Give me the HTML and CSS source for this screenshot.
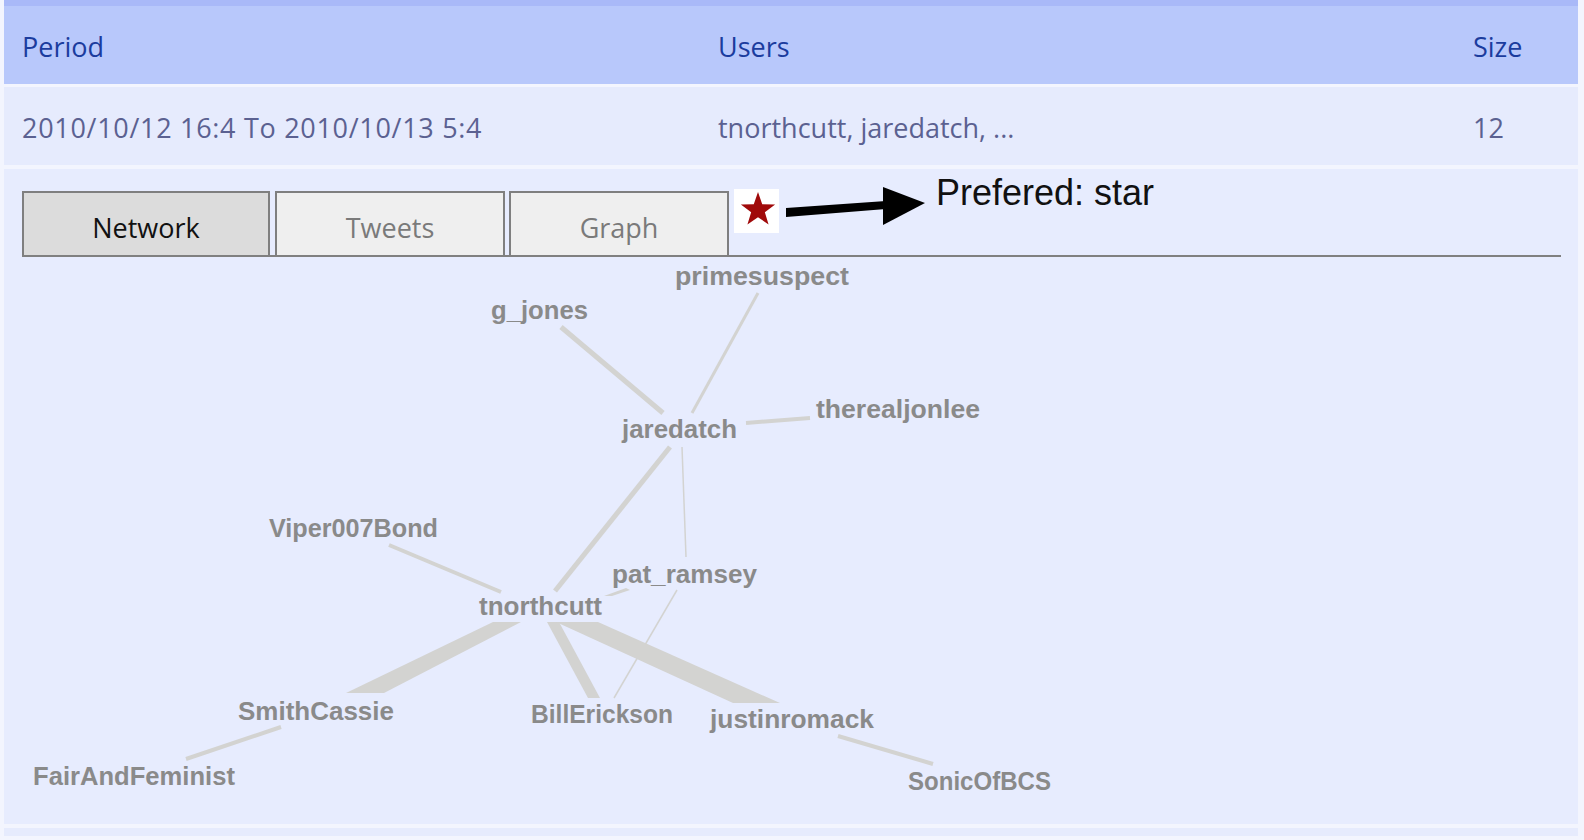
FILE: index.html
```html
<!DOCTYPE html>
<html lang="en">
<head>
<meta charset="utf-8">
<title>Conversation clusters</title>
<link rel="stylesheet" href="styles.css">
</head>
<body>
<div class="page">
  <div class="row head">
    <div class="cell">Period</div>
    <div class="cell">Users</div>
    <div class="cell">Size</div>
  </div>
  <div class="row data">
    <div class="cell period">2010/10/12 16:4 To 2010/10/13 5:4</div>
    <div class="cell">tnorthcutt, jaredatch, ...</div>
    <div class="cell">12</div>
  </div>
  <div class="panel">
    <div class="tabbar">
      <div class="tab active tab-network">Network</div>
      <div class="tab tab-tweets">Tweets</div>
      <div class="tab tab-graph">Graph</div>
      <div class="star-box">
        <svg width="45" height="44" viewBox="0 0 45 44">
          <polygon class="star" transform="translate(24 21)" points="0,-18 4.23,-5.82 17.12,-5.56 6.85,2.22 10.58,14.56 0,7.2 -10.58,14.56 -6.85,2.22 -17.12,-5.56 -4.23,-5.82"/>
        </svg>
      </div>
      <svg class="arrow" width="139" height="44" viewBox="0 0 139 44">
        <polygon points="0,23 100,16 100,24 0,32"/>
        <polygon points="97,2 139,18 97,40"/>
      </svg>
      <div class="note">Prefered: star</div>
    </div>
    <svg class="graph" width="1574" height="567" viewBox="4 257 1574 567">
      <g class="edges">
        <line x1="561" y1="327" x2="663" y2="413" stroke-width="5"/>
        <line x1="758" y1="293" x2="692" y2="413" stroke-width="3"/>
        <line x1="810" y1="418" x2="746" y2="423" stroke-width="4"/>
        <line x1="670" y1="447" x2="555" y2="591" stroke-width="5"/>
        <line x1="682" y1="447" x2="686" y2="557" stroke-width="1.5"/>
        <line x1="389" y1="545" x2="501" y2="592" stroke-width="4"/>
        <line x1="677" y1="590" x2="614" y2="698" stroke-width="1.5"/>
        <line x1="281" y1="727" x2="186" y2="759" stroke-width="4"/>
        <line x1="838" y1="736" x2="933" y2="764" stroke-width="4"/>
        <polygon points="604,596 626,588 630,590 612,596"/>
        <polygon points="493,622 521,622 384,693 346,693"/>
        <polygon points="547,622 559,622 600,698 588,698"/>
        <polygon points="556,622 598,622 780,703 733,703"/>
      </g>
      <g class="labels">
        <text x="675" y="285" textLength="174" lengthAdjust="spacingAndGlyphs">primesuspect</text>
        <text x="491" y="319" textLength="97" lengthAdjust="spacingAndGlyphs">g_jones</text>
        <text x="816" y="418" textLength="164" lengthAdjust="spacingAndGlyphs">therealjonlee</text>
        <text x="622" y="438" textLength="115" lengthAdjust="spacingAndGlyphs">jaredatch</text>
        <text x="269" y="537" textLength="169" lengthAdjust="spacingAndGlyphs">Viper007Bond</text>
        <text x="612" y="583" textLength="145" lengthAdjust="spacingAndGlyphs">pat_ramsey</text>
        <text x="479" y="615" textLength="123" lengthAdjust="spacingAndGlyphs">tnorthcutt</text>
        <text x="238" y="720" textLength="156" lengthAdjust="spacingAndGlyphs">SmithCassie</text>
        <text x="531" y="723" textLength="142" lengthAdjust="spacingAndGlyphs">BillErickson</text>
        <text x="710" y="728" textLength="164" lengthAdjust="spacingAndGlyphs">justinromack</text>
        <text x="33" y="785" textLength="202" lengthAdjust="spacingAndGlyphs">FairAndFeminist</text>
        <text x="908" y="790" textLength="143" lengthAdjust="spacingAndGlyphs">SonicOfBCS</text>
      </g>
    </svg>
  </div>
  <div class="row tail"></div>
</div>
</body>
</html>
```
FILE: styles.css
```css
html, body {
  margin: 0;
  padding: 0;
}

body {
  background: #f3f5fe;
  font-family: "Open Sans", "DejaVu Sans", sans-serif;
  width: 1584px;
  height: 840px;
  overflow: hidden;
}

.page {
  padding: 0 6px 0 4px;
}

.row {
  display: grid;
  grid-template-columns: 696px 755px 1fr;
  align-items: center;
}

.cell {
  padding-left: 18px;
  padding-top: 3px;
  font-size: 27px;
  white-space: nowrap;
}

.cell.period {
  letter-spacing: 0.7px;
}

.head {
  border-top: 6px solid #a9b9f8;
  height: 78px;
  background: #b8c8fb;
  color: #1b3c9e;
}

.data {
  margin-top: 3px;
  height: 78px;
  background: #e6ebfd;
  color: #5b6191;
}

.panel {
  margin-top: 4px;
  height: 655px;
  box-sizing: border-box;
  background: #e7ecfe;
  padding: 20px 17px 0 18px;
}

.tabbar {
  display: flex;
  align-items: flex-start;
  height: 66px;
  border-bottom: 2px solid #808080;
}

.tab {
  box-sizing: border-box;
  margin-top: 2px;
  height: 64px;
  border: 2px solid #7f7f7f;
  border-bottom: none;
  background: #efefef;
  color: #7a7a7a;
  font-size: 27px;
  display: flex;
  align-items: center;
  justify-content: center;
  padding-top: 6px;
}

.tab.active {
  background: #dcdcdc;
  color: #111111;
}

.tab-network { width: 248px; }
.tab-tweets { width: 230px; margin-left: 5px; }
.tab-graph { width: 220px; margin-left: 4px; }

.star-box {
  margin-left: 5px;
  width: 45px;
  height: 44px;
  background: #ffffff;
}

.star-box svg {
  display: block;
}

.star {
  fill: #a00a0a;
}

.arrow {
  display: block;
  margin-left: 7px;
  margin-top: -4px;
  overflow: visible;
  fill: #000000;
}

.note {
  margin-left: 11px;
  margin-top: -14px;
  font-family: "Liberation Sans", Arial, sans-serif;
  font-size: 36px;
  line-height: 36px;
  color: #111111;
  white-space: nowrap;
}

.graph {
  display: block;
  margin-left: -18px;
}

.edges line {
  stroke: #d3d3d1;
  stroke-linecap: butt;
}

.edges polygon {
  fill: #d3d3d1;
}

.labels text {
  font-family: "Liberation Sans", Arial, sans-serif;
  font-weight: bold;
  font-size: 26px;
  fill: #8a8a8a;
}

.tail {
  margin-top: 4px;
  height: 8px;
  background: #e6ebfd;
}
```
